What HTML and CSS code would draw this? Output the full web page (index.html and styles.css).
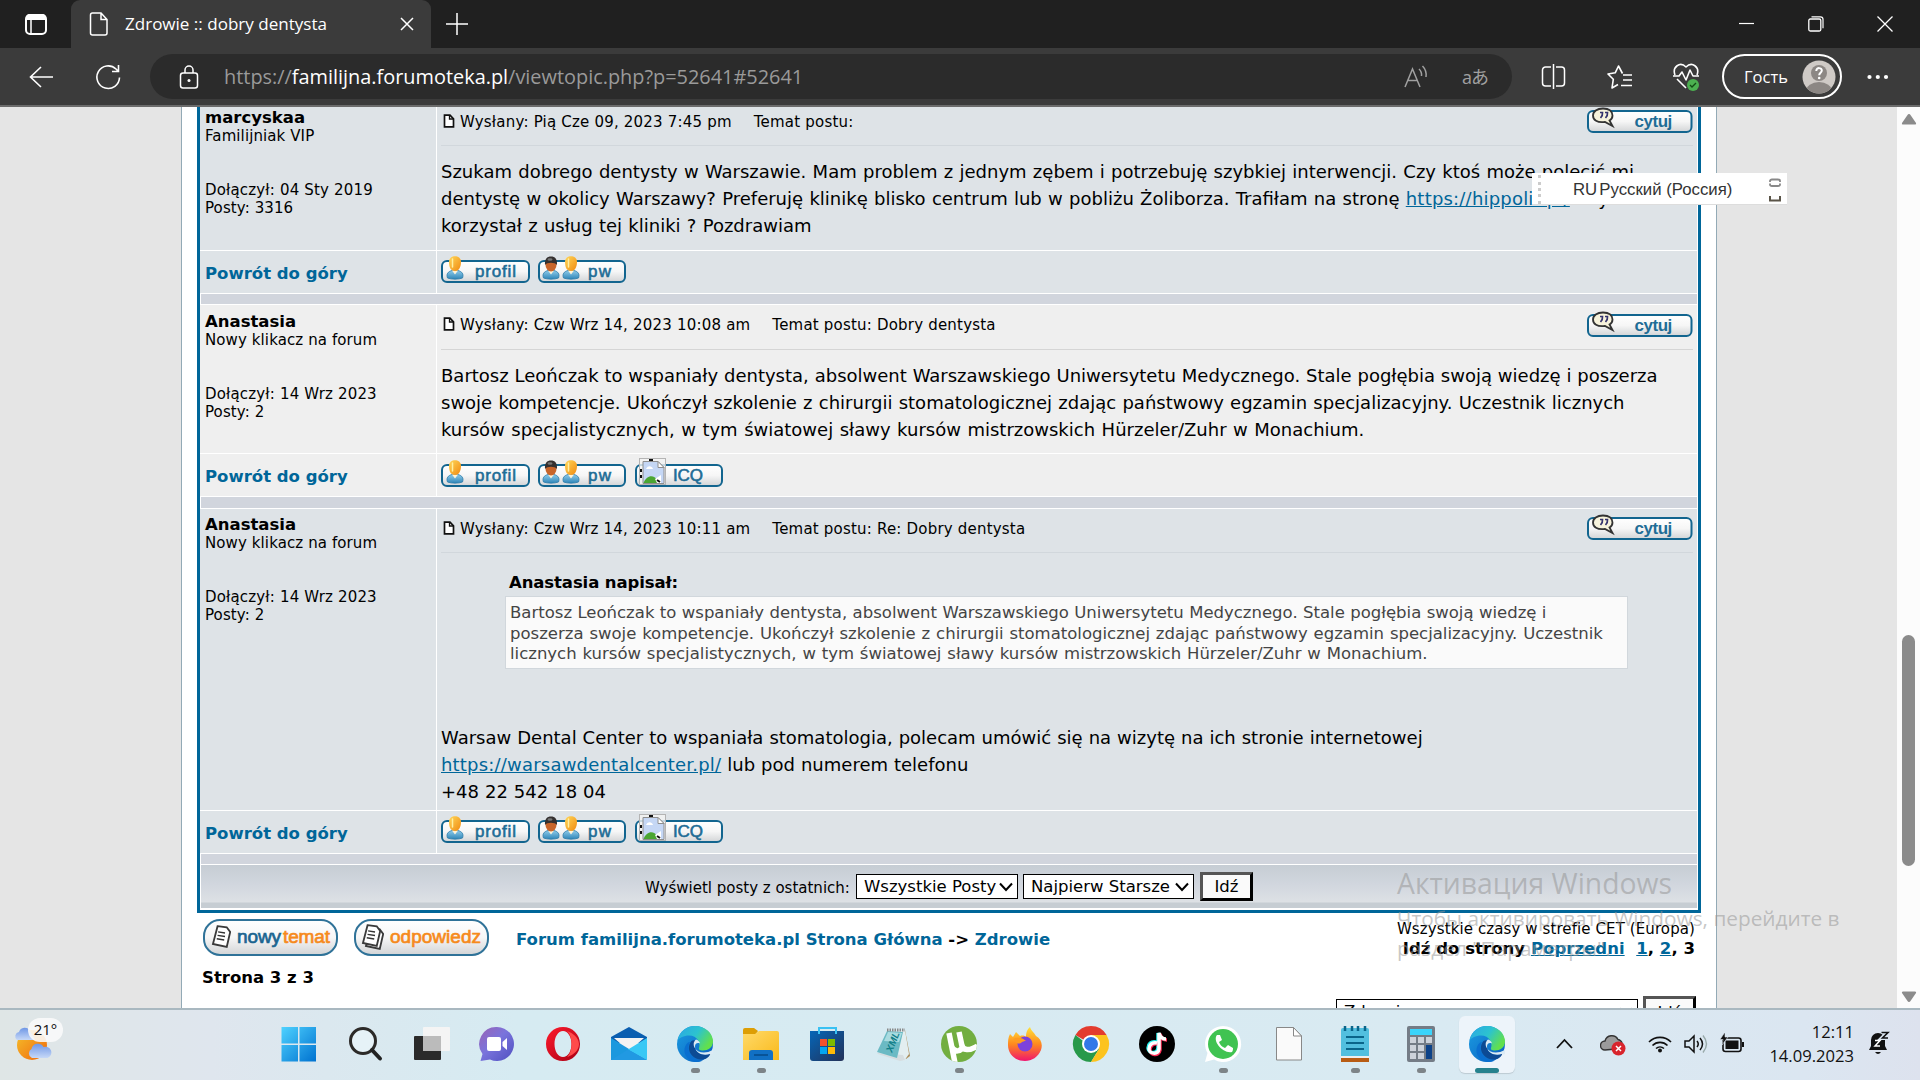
FILE: index.html
```html
<!DOCTYPE html>
<html lang="pl">
<head>
<meta charset="utf-8">
<title>Zdrowie :: dobry dentysta</title>
<link rel="stylesheet" href="styles.css">
</head>
<body>
<svg class="defs" width="0" height="0" aria-hidden="true">
  <defs>
    <linearGradient id="gBtn" x1="0" y1="0" x2="0" y2="1"><stop offset="0" stop-color="#fff"/><stop offset=".5" stop-color="#f6f6f6"/><stop offset="1" stop-color="#d2d4d6"/></linearGradient>
    <linearGradient id="gHead" x1="0" y1="0" x2="1" y2="1"><stop offset="0" stop-color="#ffd75a"/><stop offset="1" stop-color="#f08a10"/></linearGradient>
    <linearGradient id="gShirt" x1="0" y1="0" x2="0" y2="1"><stop offset="0" stop-color="#8fcbea"/><stop offset="1" stop-color="#2f86b8"/></linearGradient>
    <linearGradient id="gWin" x1="0" y1="0" x2="1" y2="1"><stop offset="0" stop-color="#4fd2ff"/><stop offset="1" stop-color="#0072d0"/></linearGradient>
    <linearGradient id="gEdgeTop" x1="0" y1="0" x2="1" y2=".5"><stop offset="0" stop-color="#2aa6e6"/><stop offset=".55" stop-color="#2cc3cf"/><stop offset="1" stop-color="#62e04c"/></linearGradient>
    <linearGradient id="gEdgeMid" x1="0" y1="0" x2="1" y2="1"><stop offset="0" stop-color="#1b9de2"/><stop offset="1" stop-color="#0a5fc0"/></linearGradient>
    <linearGradient id="gOpera" x1="0" y1="0" x2="1" y2="1"><stop offset="0" stop-color="#ff1b2d"/><stop offset="1" stop-color="#a70014"/></linearGradient>
    <linearGradient id="gFire" x1="0" y1="0" x2="0" y2="1"><stop offset="0" stop-color="#ffe23a"/><stop offset=".5" stop-color="#ff8a1e"/><stop offset="1" stop-color="#f0156e"/></linearGradient>
    <linearGradient id="gChat" x1="0" y1="0" x2="1" y2="1"><stop offset="0" stop-color="#9a63b4"/><stop offset=".45" stop-color="#7a74dc"/><stop offset="1" stop-color="#4f50c0"/></linearGradient>
    <linearGradient id="gFolder" x1="0" y1="0" x2="1" y2="1"><stop offset="0" stop-color="#ffda6a"/><stop offset="1" stop-color="#f9b91a"/></linearGradient>
    <linearGradient id="gStore" x1="0" y1="0" x2="1" y2="1"><stop offset="0" stop-color="#0566b8"/><stop offset="1" stop-color="#233158"/></linearGradient>
    <linearGradient id="gSun" x1="0" y1="0" x2="1" y2="1"><stop offset="0" stop-color="#f5c22c"/><stop offset="1" stop-color="#f0660c"/></linearGradient>
    <linearGradient id="gCloud" x1="0" y1="0" x2="0" y2="1"><stop offset="0" stop-color="#6f97e6"/><stop offset="1" stop-color="#c6d8f7"/></linearGradient>
    <symbol id="person" viewBox="0 0 18 25">
      <path d="M1.500 22C0 18 2 15.500 6 14.500h6c4 1 6 3.500 4.500 7.500-4 1.500-11 1.500-15 0z" fill="url(#gShirt)" stroke="#2a7aa8" stroke-width=".8"/>
      <path d="M6 14.500l3 4 3-4z" fill="#fff3d8"/>
      <path d="M3 6C3 2 6 .3 9 .3S15 2 15 6 13.500 15 9 15 3 11 3 6z" fill="url(#gHead)"/>
      <path d="M6.500 3v8" stroke="#fff0a0" stroke-width="1.500" stroke-linecap="round"/>
    </symbol>
    <symbol id="person-dark" viewBox="0 0 18 25">
      <path d="M1.500 22C0 18 2 15.500 6 14.500h6c4 1 6 3.500 4.500 7.500-4 1.500-11 1.500-15 0z" fill="url(#gShirt)" stroke="#2a7aa8" stroke-width=".8"/>
      <path d="M6 14.500l3 4 3-4z" fill="#fff3d8"/>
      <ellipse cx="9" cy="9" rx="5.500" ry="6.500" fill="#c8652a"/>
      <path d="M3 9C2.500 3 5 .5 9 .5S15.500 3 15 9c-2-3-10-3-12 0z" fill="#35302f"/>
      <ellipse cx="8" cy="3.500" rx="2.500" ry="1.300" fill="#777"/>
    </symbol>
    <symbol id="btn-profil" viewBox="0 0 89 28">
      <rect x="1" y="5" width="87" height="21" rx="5" fill="url(#gBtn)" stroke="#12658f" stroke-width="2"/>
      <use href="#person" x="5" y="0" width="18" height="25"/>
      <text x="34" y="20.500" class="btn-t" textLength="41">profil</text>
    </symbol>
    <symbol id="btn-pw" viewBox="0 0 88 28">
      <rect x="1" y="5" width="86" height="21" rx="5" fill="url(#gBtn)" stroke="#12658f" stroke-width="2"/>
      <use href="#person-dark" x="4" y="0" width="18" height="25"/><use href="#person" x="24" y="0" width="18" height="25"/>
      <text x="50" y="20.500" class="btn-t" textLength="23">pw</text>
    </symbol>
    <symbol id="btn-icq" viewBox="0 0 88 30">
      <rect x="1" y="7" width="86" height="21" rx="5" fill="url(#gBtn)" stroke="#12658f" stroke-width="2"/>
      <rect x="4.500" y=".5" width="26" height="26" fill="#f4f4f4" fill-opacity=".8" stroke="#b4b4b4"/>
      <path d="M14 2h4M6 11v3M6 17v3" stroke="#111" stroke-width="2"/>
      <path d="M8 3.500h15l6 6v16H8z" fill="#c5d7f5" stroke="#8e8e8e"/>
      <path d="M11 11c2-4 6-3 7 0z" fill="#fff"/>
      <path d="M8.500 25c3-8 10-9 14-3l2 3z" fill="#4ba632"/><path d="M20 21l6-4v8h-4z" fill="#fff"/><path d="M22 22l3 2" stroke="#111" stroke-width="2"/>
      <path d="M23 3.500v6h6z" fill="#fff" stroke="#8e8e8e"/>
      <text x="38" y="22.500" class="btn-t" textLength="30">ICQ</text>
    </symbol>
    <symbol id="btn-cytuj" viewBox="0 0 106 26">
      <rect x="1" y="4" width="103.500" height="21" rx="5" fill="url(#gBtn)" stroke="#12658f" stroke-width="2"/>
      <path d="M16 1.500c6.500 0 9.500 3 9.500 7 0 2-1 4-3 5l3 5.500-7.500-4c-8 1-12-2-12-6.500 0-4 4-7 10-7z" fill="#f7f3dc" stroke="#333" stroke-width="1.800"/>
      <path d="M13 5.500h2.500c.3 2.500-.5 4-2 5.500M18 5.500h2.500c.3 2.500-.5 4-2 5.500" fill="none" stroke="#35346e" stroke-width="1.700"/>
      <text x="47.500" y="20" class="btn-t bold" textLength="38">cytuj</text>
    </symbol>
    <symbol id="sheet" viewBox="0 0 16 20">
      <path d="M5 1l8 1 3 4-3 13L1 16.500z" fill="#fff" stroke="#3a3a3a" stroke-width="1.600"/>
      <path d="M5.500 6l6 1M5 9l6.500 1M4.300 12l6.500 1" stroke="#333" stroke-width="1.200"/>
    </symbol>
    <symbol id="doc" viewBox="0 0 12 14"><path d="M1.500 1.200h5.500l3.500 3.600v8H1.500z" fill="#fff" stroke="#111" stroke-width="1.700"/><path d="M6.500 1v4h4" fill="none" stroke="#111" stroke-width="1.300"/></symbol>
    <symbol id="edge" viewBox="0 0 36 36">
      <circle cx="18" cy="18" r="18" fill="url(#gEdgeMid)"/>
      <path d="M.8 14C3 4.500 10 0 18 0c10 0 18 7 18 15.500 0 6-5 9-10 9-3.500 0-4.500-1-4-2.500C24 17 20.500 9.500 12 9.500 6.500 9.500 2.500 12 .8 14z" fill="url(#gEdgeTop)"/>
      <path d="M13 16c-4.500 8 2 18.500 12 19-11 4-20-5.500-17-14 1.500-4 3.500-5 5-5z" fill="#0a6fd0"/>
      <path d="M14.500 15c-3.500 4-3.500 10 .5 14.500 4 4.500 11 5 15 2.500 2.500-1.800 3-3.500 3.500-5-5 3-12.500 1.800-15-3.500-1.500-3.500-.5-6 1-8-1.500-1.500-3.500-1.500-5-.5z" fill="#0c4a94"/>
      <path d="M19 13.500c-2.500 2-3 5-1.500 8 2.500 5 10 7 18.500 2.500l1 3c-1.500 2-3 1.500-4 1-6 1.500-12 .5-14.500-5-1.500-4 .5-7 4.500-5.500-.5-2-2-3.500-4-4z" fill="#dcebf4"/>
    </symbol>
  </defs>
</svg>

<header class="tabs">
  <div class="tabs-menu"><svg width="22" height="24" viewBox="0 0 22 24"><rect x="1" y="3" width="20" height="19" rx="4" fill="none" stroke="#fff" stroke-width="2"/><path d="M1 8V6a4 4 0 014-4h12a4 4 0 014 4v2z" fill="#fff"/><path d="M6 8v14" stroke="#fff" stroke-width="1.500"/></svg></div>
  <div class="tab">
    <svg width="20" height="24" viewBox="0 0 20 24"><path d="M3.500 1h8.500l6 6.500V21q0 2-2 2H3.500q-2 0-2-2V3q0-2 2-2z M12 1v6.500h6" fill="none" stroke="#fff" stroke-width="1.500"/></svg>
    <span class="tab-title">Zdrowie :: dobry dentysta</span>
    <svg width="14" height="14" viewBox="0 0 14 14"><path d="M1 1l12 12M13 1L1 13" stroke="#fff" stroke-width="1.500"/></svg>
  </div>
  <svg class="plus" width="22" height="22" viewBox="0 0 22 22"><path d="M11 0v22M0 11h22" stroke="#fff" stroke-width="1.500"/></svg>
  <div class="win-controls">
    <svg width="16" height="16" viewBox="0 0 16 16"><path d="M0 7.500h15" stroke="#fff" stroke-width="1.200"/></svg>
    <svg width="16" height="16" viewBox="0 0 16 16"><path d="M3.500.8h9a2.500 2.500 0 012.500 2.500v9" fill="none" stroke="#fff" stroke-width="1.200"/><rect x=".8" y="3" width="12" height="12" rx="1.500" fill="none" stroke="#fff" stroke-width="1.300"/></svg>
    <svg width="16" height="16" viewBox="0 0 16 16"><path d="M.5.5l15 15M15.500.5l-15 15" stroke="#fff" stroke-width="1.300"/></svg>
  </div>
</header>

<div class="toolbar">
  <svg class="t-back" width="25" height="22" viewBox="0 0 25 22"><path d="M24 11H1.500M12 1L1.500 11 12 21" fill="none" stroke="#fff" stroke-width="1.600"/></svg>
  <svg class="t-reload" width="26" height="26" viewBox="0 0 26 26"><path d="M24.500 13.500A11.300 11.300 0 1121 5l2 2M23.500 1v6.500H17" fill="none" stroke="#fff" stroke-width="1.600"/></svg>
  <div class="address">
    <svg width="20" height="24" viewBox="0 0 20 24"><rect x="1.500" y="8" width="17" height="15" rx="2.500" fill="none" stroke="#fff" stroke-width="1.500"/><path d="M6 8V5a4 4 0 018 0v3" fill="none" stroke="#fff" stroke-width="1.500"/><circle cx="10" cy="15.500" r="1.500" fill="#fff"/></svg>
    <span class="url">https://<b>familijna.forumoteka.pl</b>/viewtopic.php?p=52641#52641</span>
    <svg class="read" width="24" height="24" viewBox="0 0 24 24"><path d="M1 22L8.500 4 16 22M4 15.500h9M15 4a8 8 0 012.500 7M18.500 1a13 13 0 013.500 11" fill="none" stroke="#a0a0a0" stroke-width="1.500"/></svg>
    <span class="lang">aあ</span>
  </div>
  <svg class="t-split" width="26" height="26" viewBox="0 0 26 26"><path d="M10 3H4.500a3 3 0 00-3 3v13a3 3 0 003 3H10M15 3h5.500a3 3 0 013 3v13a3 3 0 01-3 3H15M12.500 0v25" fill="none" stroke="#fff" stroke-width="1.500"/></svg>
  <svg class="t-fav" width="26" height="26" viewBox="0 0 26 26"><path d="M15.500 9.500l-4-7.500-3.300 6.800L1 10l5.300 5.300L5 24l6-3.500M16 11h9M16 16h9M14 21.500h11" fill="none" stroke="#fff" stroke-width="1.600" stroke-linejoin="round"/></svg>
  <svg class="t-heart" width="28" height="30" viewBox="0 0 28 30"><path d="M2 13C-1 5 7-1 13 5c6-6 14 0 11 8M4 17l9 9M0 14h6l3-4 4 8 4-10 3 6h6" fill="none" stroke="#fff" stroke-width="1.600" stroke-linejoin="round"/><circle cx="20" cy="23" r="6" fill="#4cb050"/><path d="M17 23l2 2 4-4" fill="none" stroke="#114a14" stroke-width="1.300"/></svg>
  <div class="profile"><span>Гость</span>
    <svg width="34" height="34" viewBox="0 0 34 34"><clipPath id="pc"><circle cx="17" cy="17" r="16.500"/></clipPath><g clip-path="url(#pc)"><rect width="34" height="34" fill="#cfcac6"/><ellipse cx="17" cy="31" rx="13" ry="9" fill="#8c8784"/><circle cx="17" cy="13" r="8" fill="#8c8784"/></g><path d="M14.300 11c0-4 5.700-3.600 5.500-.2-.1 2-2.600 2.200-2.600 4.500" fill="none" stroke="#fff" stroke-width="2"/><circle cx="17.200" cy="18" r="1.300" fill="#fff"/></svg>
  </div>
  <svg class="t-dots" width="22" height="6" viewBox="0 0 22 6"><circle cx="2.500" cy="3" r="2.100" fill="#fff"/><circle cx="10.800" cy="3" r="2.100" fill="#fff"/><circle cx="19" cy="3" r="2.100" fill="#fff"/></svg>
</div>

<main class="viewport">
  <div class="page">
    <div class="thread">
      <section class="post first">
        <div class="author"><b>marcyskaa</b><span>Familijniak VIP</span><span class="joined">Dołączył: 04 Sty 2019</span><span>Posty: 3316</span></div>
        <div class="content">
          <div class="post-head"><svg width="12" height="14"><use href="#doc"/></svg><span class="sent">Wysłany: Pią Cze 09, 2023 7:45 pm</span><span>Temat postu:</span><svg class="cytuj" width="106" height="26"><use href="#btn-cytuj"/></svg></div>
          <div class="post-body">Szukam dobrego dentysty w Warszawie. Mam problem z jednym zębem i potrzebuję szybkiej interwencji. Czy ktoś może polecić mi<br>dentystę w okolicy Warszawy? Preferuję klinikę blisko centrum lub w pobliżu Żoliborza. Trafiłam na stronę <a class="wide">https://hippolit.pl/</a> Czy<br>korzystał z usług tej kliniki ? Pozdrawiam</div>
        </div>
      </section>
      <div class="foot"><a class="top">Powrót do góry</a><div class="actions"><svg width="89" height="28"><use href="#btn-profil"/></svg><svg width="88" height="28"><use href="#btn-pw"/></svg></div></div>
      <div class="spacer"></div>

      <section class="post second alt">
        <div class="author"><b>Anastasia</b><span>Nowy klikacz na forum</span><span class="joined">Dołączył: 14 Wrz 2023</span><span>Posty: 2</span></div>
        <div class="content">
          <div class="post-head"><svg width="12" height="14"><use href="#doc"/></svg><span class="sent">Wysłany: Czw Wrz 14, 2023 10:08 am</span><span>Temat postu: Dobry dentysta</span><svg class="cytuj" width="106" height="26"><use href="#btn-cytuj"/></svg></div>
          <div class="post-body"><span class="tight">Bartosz Leończak to wspaniały dentysta, absolwent Warszawskiego Uniwersytetu Medycznego. Stale pogłębia swoją wiedzę i poszerza</span><br>swoje kompetencje. Ukończył szkolenie z chirurgii stomatologicznej zdając państwowy egzamin specjalizacyjny. Uczestnik licznych<br><span class="loose">kursów specjalistycznych, w tym światowej sławy kursów mistrzowskich Hürzeler/Zuhr w Monachium.</span></div>
        </div>
      </section>
      <div class="foot alt"><a class="top">Powrót do góry</a><div class="actions"><svg width="89" height="28"><use href="#btn-profil"/></svg><svg width="88" height="28"><use href="#btn-pw"/></svg><svg class="icq" width="88" height="30"><use href="#btn-icq"/></svg></div></div>
      <div class="spacer tall"></div>

      <section class="post third">
        <div class="author"><b>Anastasia</b><span>Nowy klikacz na forum</span><span class="joined">Dołączył: 14 Wrz 2023</span><span>Posty: 2</span></div>
        <div class="content">
          <div class="post-head"><svg width="12" height="14"><use href="#doc"/></svg><span class="sent">Wysłany: Czw Wrz 14, 2023 10:11 am</span><span>Temat postu: Re: Dobry dentysta</span><svg class="cytuj" width="106" height="26"><use href="#btn-cytuj"/></svg></div>
          <div class="quote-title">Anastasia napisał:</div>
          <blockquote><span class="tight">Bartosz Leończak to wspaniały dentysta, absolwent Warszawskiego Uniwersytetu Medycznego. Stale pogłębia swoją wiedzę i</span><br>poszerza swoje kompetencje. Ukończył szkolenie z chirurgii stomatologicznej zdając państwowy egzamin specjalizacyjny. Uczestnik<br>licznych kursów specjalistycznych, w tym światowej sławy kursów mistrzowskich Hürzeler/Zuhr w Monachium.</blockquote>
          <div class="post-body">Warsaw Dental Center to wspaniała stomatologia, polecam umówić się na wizytę na ich stronie internetowej<br><a class="wide">https://warsawdentalcenter.pl/</a> lub pod numerem telefonu<br>+48 22 542 18 04</div>
        </div>
      </section>
      <div class="foot"><a class="top">Powrót do góry</a><div class="actions"><svg width="89" height="28"><use href="#btn-profil"/></svg><svg width="88" height="28"><use href="#btn-pw"/></svg><svg class="icq" width="88" height="30"><use href="#btn-icq"/></svg></div></div>
      <div class="spacer"></div>
      <div class="filter"><span>Wyświetl posty z ostatnich:</span>
        <div class="select s1">Wszystkie Posty<svg width="14" height="10" viewBox="0 0 14 10"><path d="M1 1.500l6 6.500 6-6.500" fill="none" stroke="#000" stroke-width="2"/></svg></div>
        <div class="select s2">Najpierw Starsze<svg width="14" height="10" viewBox="0 0 14 10"><path d="M1 1.500l6 6.500 6-6.500" fill="none" stroke="#000" stroke-width="2"/></svg></div>
        <div class="go">Idź</div>
      </div>
    </div>

    <div class="below">
      <svg width="135" height="37" viewBox="0 0 135 37"><rect x="1" y="1" width="133" height="35" rx="16" fill="url(#gBtn)" stroke="#2f7298" stroke-width="2"/><use href="#sheet" x="8" y="6" width="20" height="23"/><text x="34" y="24" class="big-t blue" textLength="44">nowy</text><text x="80" y="24" class="big-t" textLength="47">temat</text></svg>
      <svg width="135" height="37" viewBox="0 0 135 37"><rect x="1" y="1" width="133" height="35" rx="16" fill="url(#gBtn)" stroke="#2f7298" stroke-width="2"/><use href="#sheet" x="10" y="8" width="20" height="23"/><use href="#sheet" x="7" y="5" width="20" height="23"/><text x="36" y="24" class="big-t" textLength="91">odpowiedz</text></svg>
      <div class="crumbs"><a>Forum familijna.forumoteka.pl Strona Główna</a> -&gt; <a>Zdrowie</a></div>
      <div class="pages"><div class="tz">Wszystkie czasy w strefie CET (Europa)</div><div class="goto">Idź do strony <a>Poprzedni</a>&nbsp; <a>1</a>, <a>2</a>, 3</div></div>
    </div>
    <div class="page-no">Strona 3 z 3</div>
    <div class="jump"><span>Skocz do:</span><div class="select">Zdrowie<svg width="14" height="10" viewBox="0 0 14 10"><path d="M1 1.500l6 6.500 6-6.500" fill="none" stroke="#000" stroke-width="2"/></svg></div><div class="go">Idź</div></div>
  </div>
  <div class="scrollbar"><svg width="16" height="11" viewBox="0 0 16 11"><path d="M8 0q1 0 1.500 1L15 9q.7 1.500-1 1.500H2Q.3 10.500 1 9L6.500 1Q7 0 8 0z" fill="#8b8b8b"/></svg><div class="thumb"></div><svg width="16" height="11" viewBox="0 0 16 11"><path d="M8 11q1 0 1.500-1L15 2q.7-1.500-1-1.500H2Q.3.500 1 2l5.500 8Q7 11 8 11z" fill="#8b8b8b"/></svg></div>
</main>

<div class="watermark"><div class="w1">Активация Windows</div><div class="w2">Чтобы активировать Windows, перейдите в</div><div class="w3">раздел "Параметры".</div></div>
<div class="langbar"><i></i><span>RU</span><span class="ln">Русский (Россия)</span><svg width="14" height="26" viewBox="0 0 14 26"><path d="M2 5V4q0-1.500 2-1.500h6q2 0 2 1.500v1M2 6.500v1Q2 9 4 9h6q2 0 2-1.500v-1" fill="none" stroke="#888" stroke-width="1.800"/><path d="M2 19v4.500h3M12 19v4.500H9M5 23.500h4" fill="none" stroke="#5a5448" stroke-width="2"/></svg></div>

<footer class="taskbar">
  <div class="weather"><svg width="38" height="36" viewBox="0 0 38 36"><circle cx="18" cy="20" r="15" fill="url(#gSun)"/><path d="M3 15a4.500 4.500 0 012-8 6 6 0 0111-1l5 9z" fill="url(#gCloud)"/><path d="M18 33a5 5 0 01-.5-9 6.500 6.500 0 0112-2 5.500 5.500 0 014 11z" fill="url(#gCloud)"/></svg><span>21°</span></div>
  <nav class="apps">
    <div><svg viewBox="0 0 36 36"><path d="M.5 1h16.500v16.500H.5zM18.500 1h16.500v16.500H18.500zM.5 19h16.500v16.500H.5zM18.500 19h16.500v16.500H18.500z" fill="url(#gWin)"/></svg></div>
    <div><svg viewBox="0 0 36 36"><circle cx="16" cy="15" r="12.500" fill="#e6f2f7" stroke="#2c2a28" stroke-width="3"/><path d="M25 24l8 8.500" stroke="#222" stroke-width="4" stroke-linecap="round"/></svg></div>
    <div><svg viewBox="0 0 36 36"><rect x="1" y="10" width="27" height="24" rx="1" fill="#2a2a2a"/><rect x="10" y="1" width="27" height="24" rx="1" fill="#f4f4f4"/><rect x="10" y="10" width="18" height="15" fill="#bbb"/></svg></div>
    <div><svg viewBox="0 0 36 36"><path d="M18 1a17 17 0 11-7 32.500L1.500 35l2-7A17 17 0 0118 1z" fill="url(#gChat)"/><rect x="8" y="11" width="14" height="14" rx="2" fill="#fff"/><path d="M23.500 16l4.500-4v12l-4.500-4z" fill="#fff"/></svg></div>
    <div><svg viewBox="0 0 36 36"><path d="M18 1c9.500 0 17 7.500 17 17s-7.500 17-17 17S1 27.500 1 18 8.500 1 18 1zm0 4c-5 0-8.500 6-8.500 13S13 31 18 31s8.500-6 8.500-13S23 5 18 5z" fill="url(#gOpera)" fill-rule="evenodd"/><path d="M22 5c6 2 12 7 12 13s-5 11-12 13c6-5 6-21 0-26z" fill="#ff4b4b"/></svg></div>
    <div><svg viewBox="0 0 36 36"><path d="M0 11L18 1l18 10v6H0z" fill="#0a5eb0"/><path d="M3 12h30L18 25z" fill="#f3f3f3"/><path d="M0 12l36 22H0z" fill="#1b98de"/><path d="M36 12v22L17 23.500z" fill="#38c8f5"/><path d="M0 34l17-10.500L36 34z" fill="#2199e2"/></svg></div>
    <div class="run"><svg viewBox="0 0 36 36"><use href="#edge"/></svg></div>
    <div class="run"><svg viewBox="0 0 36 36"><path d="M0 4q0-2 2-2h9l4 3-3 4H0z" fill="#dd9e05"/><path d="M0 8h12l4-3h18q2 0 2 2v27H0z" fill="url(#gFolder)"/><path d="M6 34v-7q0-3 3-3h18q3 0 3 3v7z" fill="#1170c4"/><path d="M11 29h14" stroke="#064a88" stroke-width="1.500"/></svg></div>
    <div><svg viewBox="0 0 36 36"><path d="M1 5h34v27q0 3-3 3H4q-3 0-3-3z" fill="url(#gStore)"/><path d="M10 8V2h17v6" fill="none" stroke="#39c1f3" stroke-width="2"/><path d="M11 13h7v7h-7z" fill="#f4512c"/><path d="M19 13h7v7h-7z" fill="#7fba00"/><path d="M11 21h7v7h-7z" fill="#05a6f0"/><path d="M19 21h7v7h-7z" fill="#ffba08"/></svg></div>
    <div><svg viewBox="0 0 36 36"><path d="M30 4l5 26-4 3-4-3z" fill="#aa8c5a"/><path d="M24 5l6-1 4 24-5 7-5-4z" fill="#e3eef0"/><path d="M2 27l26 2 2 5-5 1-22-7z" fill="#d6dde0"/><path d="M12 5l16 1-6 26-20-6z" fill="#6bbac4"/><path d="M13 6l14 1-3 9-15-1z" fill="#a9dbe0"/><path d="M12 4h18" stroke="#888" stroke-width="3" stroke-dasharray="1.500 1"/><text x="0" y="0" transform="translate(17 27) rotate(-68)" class="xml">XML</text></svg></div>
    <div class="run"><svg viewBox="0 0 36 36"><clipPath id="uc"><circle cx="18" cy="18" r="18"/></clipPath><circle cx="18" cy="18" r="18" fill="#72ae40"/><path d="M8 7l6 30M10.500 20c2 7 11 6 10.500 0L18 6M20.500 18c1 7 8 7 16 2" fill="none" stroke="#fff" stroke-width="5.500" clip-path="url(#uc)"/></svg></div>
    <div><svg viewBox="0 0 36 36"><path d="M3 8l3 3 3-5 4 4c3-1 5 0 6 1 0-6 2-8 4-10 1 4 4 5 6 9 5 3 7 8 5 14-3 7-9 11-16 11C8 35 1 28 1 19c0-4 0-7 2-11z" fill="url(#gFire)"/><circle cx="18" cy="18" r="7.500" fill="#7c42dc"/><path d="M6 13c6-3 11 0 13 2-5 0-5 4-9 2z" fill="#ff9b20"/></svg></div>
    <div><svg viewBox="0 0 36 36"><path d="M18 18L2.400 9A18 18 0 0133.600 9z" fill="#e33b2e"/><path d="M18 18H14L2.400 9A18 18 0 0018 36l8-13z" fill="#27994a"/><path d="M18 9h15.600A18 18 0 0118 36l8-13z" fill="#fcc31e"/><circle cx="18" cy="18" r="9" fill="#fff"/><circle cx="18" cy="18" r="7" fill="#3178e8"/></svg></div>
    <div><svg viewBox="0 0 36 36"><circle cx="18" cy="18" r="18" fill="#000"/><g fill="none" stroke-width="3.500"><path d="M17 16c-5-1-8 2-8 6 0 5 9 7 10 0V7c1 4 3 6 7 6" stroke="#25f4ee"/><path d="M19 18c-5-1-8 2-8 6 0 5 9 7 10 0V8c1 4 3 6 7 6" stroke="#fe2c55"/><path d="M18 17c-5-1-8 2-8 6 0 5 9 6 10 0V7c1 4 3 6 7 6" stroke="#fff"/></g></svg></div>
    <div class="run"><svg viewBox="0 0 36 36"><path d="M18 0a18 18 0 11-9 33.500L0 36l2.500-9A18 18 0 0118 0z" fill="#fff"/><circle cx="18" cy="18" r="15" fill="#40c351"/><path d="M12 9c-5 6 6 19 15 17 1-1 1-3 1-4l-5-3-3 3c-3-1-5-3-6-6l3-2-2-5z" fill="#fff"/></svg></div>
    <div><svg viewBox="0 0 36 36"><path d="M5.500 1.500h17l8 8.500v24h-25z" fill="#fafafa" stroke="#888"/><path d="M22.500 1.500v8.500h8z" fill="#fff" stroke="#888"/></svg></div>
    <div class="run"><svg viewBox="0 0 36 36"><path d="M4 31h28v5H4z" fill="#b85c14"/><path d="M4 28h28v4H4z" fill="#eee"/><path d="M4 4q0-2 2-2h24q2 0 2 2v26H4z" fill="#52bfdf"/><path d="M9 11h18M9 17h18M9 23h18" stroke="#0a658a" stroke-width="2"/><path d="M8 0v5M15 0v5M21 0v5M28 0v5" stroke="#0a658a" stroke-width="2.500"/></svg></div>
    <div class="run"><svg viewBox="0 0 36 36"><rect x="4" width="28" height="36" rx="2" fill="#747c86"/><rect x="7" y="3" width="22" height="6" fill="#3bd4fb"/><path d="M7 11h6v6H7zM15 11h6v6h-6zM23 11h6v6h-6zM7 19h6v6H7zM15 19h6v6h-6zM7 27h6v6H7zM15 27h6v6h-6z" fill="#cdd2da"/><path d="M23 19h6v14h-6z" fill="#0d4288"/></svg></div>
    <div class="run active"><svg viewBox="0 0 36 36"><use href="#edge"/></svg></div>
  </nav>
  <div class="tray">
    <svg width="17" height="11" viewBox="0 0 17 11"><path d="M1 10l7.500-8L16 10" fill="none" stroke="#111" stroke-width="1.800"/></svg>
    <svg class="cloud" width="26" height="22" viewBox="0 0 26 22"><path d="M5 16a4.500 4.500 0 010-9 7 7 0 0113-1.500 5.500 5.500 0 013 9z" fill="#9b9b9b" stroke="#333" stroke-width="1.400"/><circle cx="18.500" cy="14.500" r="7" fill="#d8242c"/><path d="M16 12l5 5m0-5l-5 5" stroke="#fff" stroke-width="1.500"/></svg>
    <svg class="wifi" width="24" height="18" viewBox="0 0 24 18"><path d="M1 7a15.500 15.500 0 0122 0M4.500 10.500a10.500 10.500 0 0115 0M8 13.500a6 6 0 018 0" fill="none" stroke="#111" stroke-width="1.600"/><circle cx="12" cy="15.500" r="2" fill="#111"/></svg>
    <svg class="vol" width="24" height="20" viewBox="0 0 24 20"><path d="M1 7h4l5-5v16l-5-5H1z" fill="none" stroke="#111" stroke-width="1.500"/><path d="M13 7q2.500 3 0 6M16 4q5 6 0 12" fill="none" stroke="#111" stroke-width="1.500"/><path d="M19 1.500q7 8.500 0 17" fill="none" stroke="#9aa" stroke-width="1.400"/></svg>
    <svg class="bat" width="25" height="22" viewBox="0 0 25 22"><rect x="3" y="5" width="18" height="13.500" rx="2.500" fill="none" stroke="#111" stroke-width="1.600"/><rect x="5.500" y="7.500" width="13" height="8.500" fill="#111"/><path d="M22 9h2v5h-2z" fill="#111"/><path d="M5-1L0 6.500h3L2 12l6-8H5z" fill="#111" stroke="#dbe7f2" stroke-width=".6"/></svg>
    <div class="clock"><div>12:11</div><div>14.09.2023</div></div>
    <svg class="bell" width="22" height="25" viewBox="0 0 22 25"><path d="M1 19l2-4V9a7 7 0 0114 0v6l2 4zM7 21h6q-3 4-6 0z" fill="#111"/><path d="M13 1h7l-6 6h6" fill="none" stroke="#dbe7f2" stroke-width="4"/><path d="M13.500 1.500H20L14.500 7H20" fill="none" stroke="#111" stroke-width="1.600"/><path d="M7 9.500h5l-5 5.500h5" fill="none" stroke="#fff" stroke-width="1.500"/></svg>
  </div>
</footer>
</body>
</html>
```
FILE: styles.css
```css
* { box-sizing: border-box; }
body {
  margin: 0; width: 1920px; height: 1080px; overflow: hidden;
  display: flex; flex-direction: column; position: relative;
  font-family: "DejaVu Sans", sans-serif; color: #000; background: #e5e5e5;
}
svg { display: block; flex: none; }
.defs { position: absolute; }

/* browser chrome */
.tabs { height: 48px; flex: none; background: #202020; display: flex; align-items: center; color: #fff; }
.tabs-menu { width: 71px; padding-left: 25px; }
.tab { width: 360px; height: 48px; background: #3b3b3b; border-radius: 9px 9px 0 0; display: flex; align-items: center; padding: 0 17px 0 18px; }
.tab-title { font: 17.05px "Open Sans", sans-serif; margin: -1px 0 0 16px; flex: 1; white-space: nowrap; }
.plus { margin-left: 15px; }
.win-controls { margin-left: auto; display: flex; gap: 53px; padding-right: 27px; }
.toolbar { height: 59px; flex: none; background: #3b3b3b; border-bottom: 2px solid #6b6b6b; display: flex; align-items: center; color: #fff; }
.t-back { margin-left: 29px; }
.t-reload { margin-left: 41px; }
.address { width: 1362px; height: 45px; margin-left: 29px; border-radius: 23px; background: #2b2b2b; display: flex; align-items: center; padding-left: 29px; }
.url { margin-left: 25px; font: 19.9px "Open Sans", sans-serif; color: #9a9a9a; white-space: nowrap; }
.url b { font-weight: 400; color: #fff; }
.read { margin-left: auto; }
.lang { margin: 0 24px 0 34px; font: 18px "Open Sans", "Noto Sans CJK JP", sans-serif; line-height: 24px; letter-spacing: -1px; color: #a0a0a0; white-space: nowrap; }
.t-split { margin-left: 29px; }
.t-fav { margin-left: 40px; }
.t-heart { margin-left: 40px; }
.profile { margin-left: 21px; width: 120px; height: 45px; border: 2px solid #fff; border-radius: 23px; display: flex; align-items: center; justify-content: space-between; padding: 0 4px 0 20px; font: 16.5px "Open Sans", sans-serif; }
.t-dots { margin-left: 25px; }

/* forum page */
.viewport { height: 901px; flex: none; display: flex; overflow: hidden; padding-left: 181px; justify-content: space-between; }
.page { width: 1536px; height: 960px; flex: none; background: #fff; border: solid #93aab6; border-width: 0 1px; padding: 0 15px; white-space: nowrap; }
.thread { margin-top: -6px; height: 812px; border: 3px solid #069; border-top: 0; padding-left: 1px; padding-right: 1px; background: #fff; }
.post, .foot { display: grid; grid-template-columns: 235px 1fr; column-gap: 1px; margin-bottom: 1px; }
.post > *, .foot > * { background: #dee3e7; }
.alt > * { background: #efefef; }
.first { height: 149px; }
.second { height: 148px; }
.third { height: 301px; }
.author { padding: 7px 0 0 5px; margin-left: -1px; width: 236px; font-size: 15px; line-height: 18px; letter-spacing: .1px; display: flex; flex-direction: column; }
.author b { font-size: 16.5px; line-height: 19px; letter-spacing: 0; }
.joined { margin-top: 36px; letter-spacing: .17px; }
.content { padding: 0 4px; }
.post-head { height: 45px; border-bottom: 1px solid #d1d7dc; display: flex; align-items: flex-start; padding: 11px 0 0 2px; font-size: 15px; line-height: 18px; letter-spacing: .2px; }
.first .post-head { padding-top: 12px; }
.first .cytuj { margin-top: -6px; }
.second .post-head { border-color: #d5d5d5; }
.post-head > svg:first-child { margin-top: 1px; }
.sent { margin: 0 22px 0 5px; }
.cytuj { margin: -5px 0 0 auto; }
.third .author { padding-top: 6px; }
.third .post-head { height: 44px; }
.third .cytuj { margin-top: -6px; }
.post-body { font-size: 18px; line-height: 27px; padding-top: 12px; word-spacing: .56px; }
.third .post-body { word-spacing: .27px; }
.tight { word-spacing: .15px; }
.loose { word-spacing: .8px; }
.wide { letter-spacing: .2px; }
a { color: #069; }
.post-body a { text-decoration: underline; }
.quote-title { font-size: 16.5px; font-weight: 700; line-height: 20px; margin: 20px 0 3px 68px; letter-spacing: -.1px; }
blockquote { margin: 0 65px 43px 64px; height: 73px; border: 1px solid #d1d7dc; background: #fafafa; color: #444; font-size: 16.5px; line-height: 20.5px; padding: 6px 0 0 4px; word-spacing: .6px; }
.foot { height: 42px; }
.foot .top { font-size: 16.5px; font-weight: 700; line-height: 20px; padding: 13px 0 0 5px; margin-left: -1px; width: 236px; }
.actions { display: flex; gap: 8px; padding: 5px 0 0 4px; }
.foot.alt .actions { padding-top: 6px; }
.actions svg:nth-child(3) { margin-left: 1px; }
.icq { margin-top: -2px; }
.spacer { height: 10px; background: #d1d5dd; margin-bottom: 1px; }
.tall { height: 11px; }
.filter { height: 43px; background: linear-gradient(#c6cdd4, #d1d6de 45%, #dde1e5 37px, #c6cdd3 38px); display: flex; padding-left: 444px; font-size: 15px; line-height: 18px; }
.filter > span { margin-top: 14px; width: 211px; }
.select { height: 25px; background: #fff; border: 1px solid #000; font-size: 16.5px; line-height: 20px; padding: 2px 4px 0 7px; display: flex; justify-content: space-between; }
.select svg { margin-top: 5px; }
.s1 { width: 162px; margin-top: 9px; }
.s2 { width: 171px; margin: 9px 6px 0 5px; }
.go { width: 53px; height: 29px; border: 3px solid #000; border-top-color: #555; border-left-color: #555; background: #fafafa; font-size: 16.5px; line-height: 24px; text-align: center; margin-top: 7px; }
.btn-t { font: 17px "Liberation Sans", sans-serif; fill: #1f6d96; stroke: #1f6d96; stroke-width: .6px; }
.btn-t.bold { font-weight: 700; font-size: 17px; stroke: none; }
.big-t { font: 19px "Liberation Sans", sans-serif; fill: #f68a1c; stroke: #f68a1c; stroke-width: .7px; }
.big-t.blue { fill: #1b6590; stroke: #1b6590; }

.below { display: flex; padding: 6px 6px 0 6px; height: 56px; gap: 16px; }
.crumbs { font-size: 16.5px; font-weight: 700; line-height: 20px; margin: 11px 0 0 11px; }
.pages { margin-left: auto; text-align: right; }
.tz { font-size: 15px; line-height: 18px; margin-top: 1px; letter-spacing: .1px; }
.goto { font-size: 16.5px; font-weight: 700; line-height: 20px; margin-top: 1px; letter-spacing: .04px; }
.goto a { text-decoration: underline; }
.page-no { font-size: 16.5px; font-weight: 700; line-height: 20px; padding-left: 5px; margin-top: -1px; }
.jump { display: flex; justify-content: flex-end; font-size: 15px; padding: 8px 5px 0 0; }
.jump span { margin: 10px 8px 0 0; }
.jump .select { width: 302px; margin: 3px 5px 0 0; padding-top: 2px; }
.jump .go { margin-top: 0; line-height: 28px; }
.scrollbar { width: 23px; background: #fcfcfc; display: flex; flex-direction: column; align-items: center; padding: 7px 0 6px; }
.scrollbar svg:last-child { margin-top: auto; }
.thumb { width: 13px; height: 231px; border-radius: 7px; background: #8b8b8b; margin-top: 510px; }

/* overlays */
.watermark { position: absolute; left: 1397px; top: 860px; font-family: "Open Sans", sans-serif; color: rgba(150, 150, 150, .55); white-space: nowrap; }
.w1 { font-size: 28.3px; line-height: 46px; }
.w2 { font-size: 20.8px; line-height: 30px; margin-top: -3px; }
.w3 { font-size: 20.8px; line-height: 30px; }
.langbar { position: absolute; left: 1532px; top: 173px; width: 255px; height: 31px; background: #fff; box-shadow: 0 1px 0 #ddd; display: flex; align-items: center; font: 16.8px "Liberation Sans", sans-serif; color: #333; padding: 2px 5px 0 6px; white-space: nowrap; }
.langbar i { height: 29px; border-left: 3px dotted #ccc; margin-right: 32px; }
.langbar .ln { margin-left: 2px; flex: 1; }

/* taskbar */
.taskbar { flex: 1; border-top: 2px solid #a9b8c0; background: linear-gradient(90deg, #dfe6e6 0, #dfe6ee 11%, #dbe8ef 17%, #d6ebf2 27%, #d9eaf2 75%, #dbe6f1 94%, #dde2ee); display: flex; color: #111; }
.weather { width: 264px; padding: 15px 0 0 14px; display: flex; }
.weather span { margin: -7px 0 0 -24px; width: 35px; height: 24px; border-radius: 12px; background: rgba(250, 250, 250, .88); font: 15px "Open Sans", sans-serif; line-height: 23px; text-align: center; z-index: 1; }
.apps { display: flex; gap: 10.03px; padding-top: 6px; }
.apps > div { width: 56px; height: 57px; padding-top: 10px; display: flex; flex-direction: column; align-items: center; gap: 6px; border-radius: 6px; }
.apps > div:first-child { margin-left: 7px; }
.apps svg { width: 36px; height: 36px; overflow: visible; }
.run::after { content: ""; width: 9px; height: 5px; border-radius: 3px; background: #7d8488; }
.active { background: #edf4fa; box-shadow: 0 1px 1px #bccad2; }
.active::after { width: 24px; background: #26828e; }
.xml { font: italic bold 10px "Liberation Sans", sans-serif; fill: #117f88; }
.tray { margin-left: auto; display: flex; align-items: center; padding: 0 30px 3px 0; }
.cloud { margin-left: 27px; margin-top: 2px; }
.wifi { margin-left: 22px; }
.vol { margin-left: 12px; }
.bat { margin-left: 12px; }
.clock { width: 109px; text-align: right; font: 16.6px "Open Sans", sans-serif; line-height: 24px; }
.bell { margin-left: 14px; }
```
